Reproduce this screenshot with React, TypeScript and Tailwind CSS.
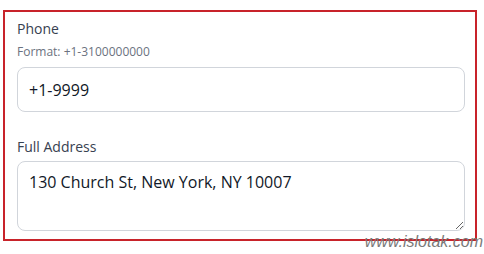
export default function App() {
  return (
    <div className="relative w-[484px] h-[254px] bg-white" style={{ fontFamily: '"Open Sans", "Noto Sans", sans-serif' }}>
      <div className="absolute left-[3px] top-[10px] w-[474px] h-[231px] border-2 border-[#c8232a] px-[12px] pt-[7px]">
        <div className="flex flex-col">
          <label className="text-[14px] leading-[20px] font-medium text-[#374151]">Phone</label>
          <span className="text-[12px] leading-[18px] mt-[4px] text-[#6b7280]">Format: +1-3100000000</span>
          <input
            defaultValue="+1-9999"
            className="mt-[6px] h-[45px] w-[448px] rounded-[8px] border border-[#d1d5db] px-[11px] text-[16px] text-[#111827] outline-none"
          />
          <label className="mt-[25px] text-[14px] leading-[20px] font-medium text-[#374151]">Full Address</label>
          <textarea
            defaultValue="130 Church St, New York, NY 10007"
            className="mt-[4px] h-[70px] w-[448px] rounded-[8px] border border-[#d1d5db] px-[11px] pt-[8px] pb-[10px] text-[16px] leading-[24px] text-[#111827] outline-none"
          />
        </div>
      </div>
      <span className="absolute right-[1px] top-[232px] text-[16px] italic text-[#7a7a7a] leading-[20px]" style={{ fontFamily: '"Liberation Sans", sans-serif' }}>
        www.islotak.com
      </span>
    </div>
  );
}
